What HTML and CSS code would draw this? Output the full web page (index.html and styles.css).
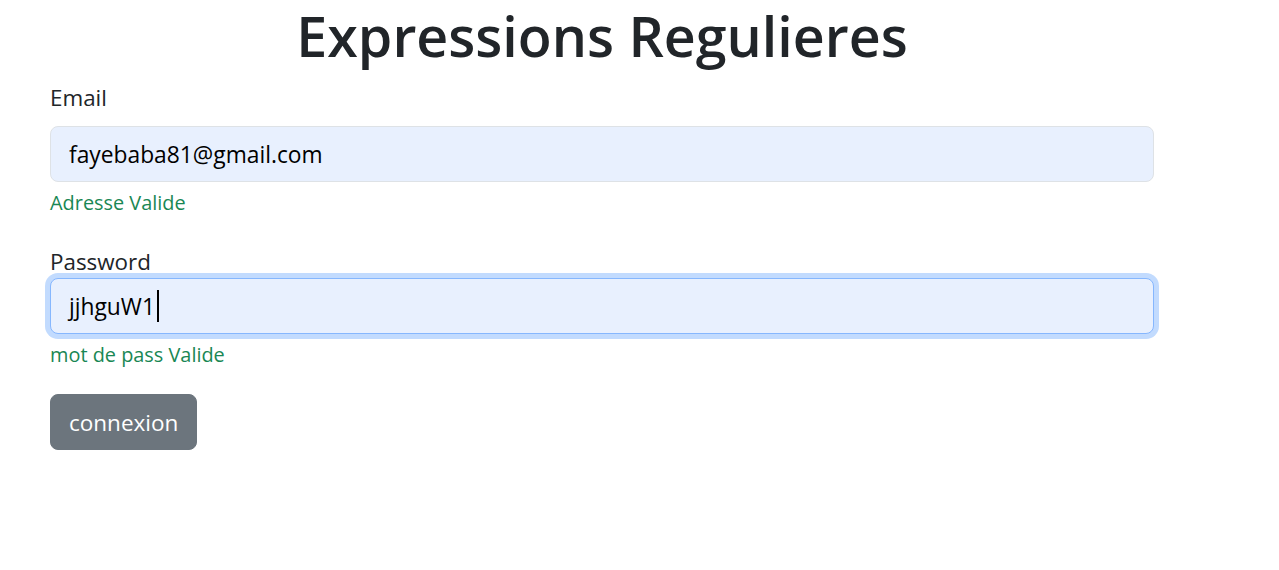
FILE: index.html
```html
<!DOCTYPE html>
<html lang="fr">
<head>
<meta charset="utf-8">
<title>Expressions Regulieres</title>
<link rel="stylesheet" href="styles.css">
</head>
<body>
<main class="page">
  <h1 class="title">Expressions Regulieres</h1>
  <form class="form">
    <div class="group">
      <label class="label" for="email">Email</label>
      <input class="field" id="email" type="text" value="fayebaba81@gmail.com">
      <div class="feedback">Adresse Valide</div>
    </div>
    <div class="group group-pass">
      <label class="label">Password</label>
      <div class="field field-focus"><span>jjhguW1</span><span class="caret"></span></div>
      <div class="feedback">mot de pass Valide</div>
    </div>
    <button class="btn" type="button">connexion</button>
  </form>
</main>
</body>
</html>
```
FILE: styles.css
```css
* { box-sizing: border-box; }
body {
  margin: 0;
  background: #fff;
  color: #212529;
  font-family: "Open Sans", "Noto Sans", sans-serif;
}
.page {
  width: 1104px;
  margin-left: 50px;
}
.title {
  margin: 0;
  text-align: center;
  font-size: 55.5px;
  font-weight: 600;
  line-height: 72px;
}
.form {
  display: flex;
  flex-direction: column;
  align-items: flex-start;
}
.group {
  width: 100%;
  display: flex;
  flex-direction: column;
}
.label {
  font-size: 22.4px;
  line-height: 30px;
  margin-top: 11px;
  margin-bottom: 13px;
}
.group-pass .label { margin-top: 31px; margin-bottom: 1px; }
.field {
  display: flex;
  align-items: center;
  width: 100%;
  height: 56px;
  padding: 0 18px;
  font: inherit;
  font-size: 22.8px;
  color: #000;
  background: #e8f0fe;
  border: 1px solid #dee2e6;
  border-radius: 8px;
  outline: none;
}
.field-focus {
  border-color: #86b7fe;
  box-shadow: 0 0 0 5px #c2dbfe;
}
.caret {
  display: inline-block;
  width: 2px;
  height: 32px;
  background: #000;
  margin-left: 2px;
}
.feedback {
  color: #198754;
  font-size: 19.9px;
  line-height: 26px;
  margin-top: 8px;
}
.btn {
  margin-top: 26px;
  height: 56px;
  padding: 0 18px;
  font: inherit;
  font-size: 22.5px;
  color: #fff;
  background: #6c757d;
  border: 1px solid #6c757d;
  border-radius: 8px;
}
```
